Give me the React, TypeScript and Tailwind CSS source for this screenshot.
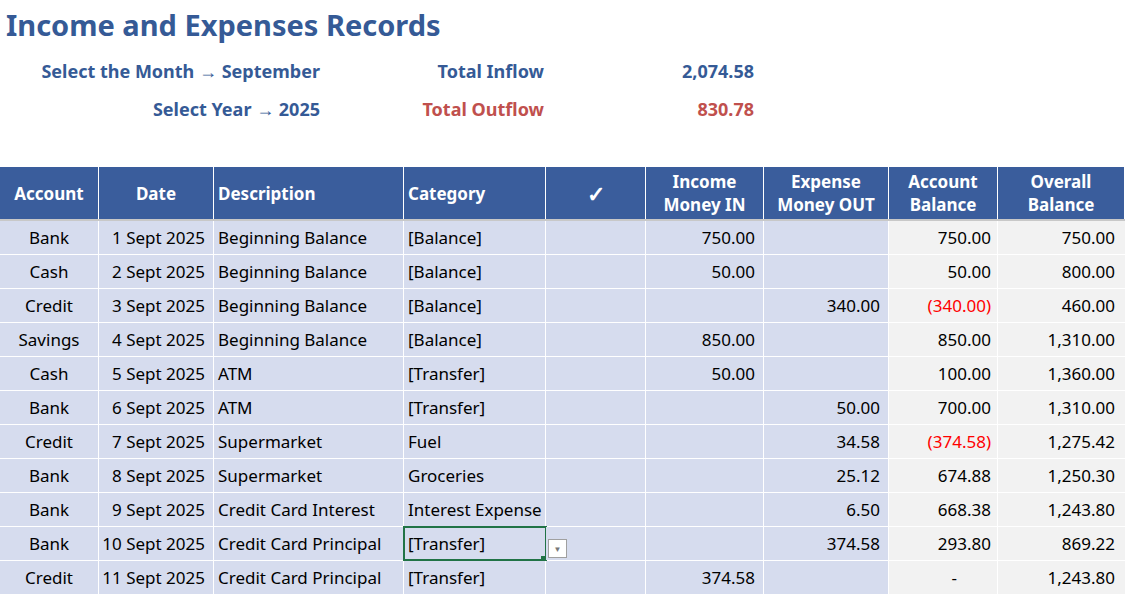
import React from 'react';

const rows = [
  ['Bank', '1 Sept 2025', 'Beginning Balance', '[Balance]', '750.00', '', '750.00', '750.00'],
  ['Cash', '2 Sept 2025', 'Beginning Balance', '[Balance]', '50.00', '', '50.00', '800.00'],
  ['Credit', '3 Sept 2025', 'Beginning Balance', '[Balance]', '', '340.00', '(340.00)', '460.00'],
  ['Savings', '4 Sept 2025', 'Beginning Balance', '[Balance]', '850.00', '', '850.00', '1,310.00'],
  ['Cash', '5 Sept 2025', 'ATM', '[Transfer]', '50.00', '', '100.00', '1,360.00'],
  ['Bank', '6 Sept 2025', 'ATM', '[Transfer]', '', '50.00', '700.00', '1,310.00'],
  ['Credit', '7 Sept 2025', 'Supermarket', 'Fuel', '', '34.58', '(374.58)', '1,275.42'],
  ['Bank', '8 Sept 2025', 'Supermarket', 'Groceries', '', '25.12', '674.88', '1,250.30'],
  ['Bank', '9 Sept 2025', 'Credit Card Interest', 'Interest Expense', '', '6.50', '668.38', '1,243.80'],
  ['Bank', '10 Sept 2025', 'Credit Card Principal', '[Transfer]', '', '374.58', '293.80', '869.22'],
  ['Credit', '11 Sept 2025', 'Credit Card Principal', '[Transfer]', '374.58', '', '-', '1,243.80'],
];

const cols = 'grid grid-cols-[99px_115px_190px_142px_100px_118px_125px_109px_127px]';

export default function App() {
  return (
    <div className="w-[1125px] h-[596px] overflow-hidden bg-white font-['Liberation_Sans'] text-[17px] text-black">
      <h1 className="pl-[6px] pt-[6px] h-[52px] text-[29px] font-bold text-[#355a96] leading-[38px]">Income and Expenses Records</h1>
      <div className="grid grid-cols-[320px_224px_210px] font-bold text-[18px] text-[#355a96] leading-[38px]">
        <div className="text-right">Select the Month → September</div>
        <div className="text-right">Total Inflow</div>
        <div className="text-right">2,074.58</div>
        <div className="text-right">Select Year → 2025</div>
        <div className="text-right text-[#c0504d]">Total Outflow</div>
        <div className="text-right text-[#c0504d]">830.78</div>
      </div>
      <div className={`${cols} mt-[39px] h-[54px] bg-[#3a5d9c] text-white font-bold border-b-2 border-[#c8c8c8]`}>
        {['Account', 'Date', 'Description', 'Category', '✓', 'Income Money IN', 'Expense Money OUT', 'Account Balance', 'Overall Balance'].map((h, i) => (
          <div key={i} className={`flex items-center border-r border-white leading-[23px] ${i === 2 || i === 3 ? 'pl-1' : 'justify-center text-center'} ${i === 4 ? 'text-[22px]' : ''}`}>
            {i >= 5 ? <span className="w-[100px]">{h}</span> : h}
          </div>
        ))}
      </div>
      {rows.map((r, ri) => (
        <div key={ri} className={`${cols} h-[34px] border-b border-white`}>
          <div className="bg-[#d6dcee] border-r border-white flex items-center justify-center">{r[0]}</div>
          <div className="bg-[#d6dcee] border-r border-white flex items-center justify-end pr-2">{r[1]}</div>
          <div className="bg-[#d6dcee] border-r border-white flex items-center pl-1">{r[2]}</div>
          <div className={`bg-[#d6dcee] border-r border-white flex items-center pl-1 relative ${ri === 9 ? 'outline-2 outline-[#217346] -outline-offset-1' : ''}`}>
            {r[3]}
            {ri === 9 && <span className="absolute right-[-2px] bottom-[-2px] w-[6px] h-[6px] bg-[#217346]" />}
          </div>
          <div className="bg-[#d6dcee] border-r border-white relative">
            {ri === 9 && (
              <span className="absolute left-[2px] top-[12px] w-[19px] h-[19px] bg-white border border-[#a0a0a0] flex items-center justify-center text-[8px] text-[#777]">▼</span>
            )}
          </div>
          <div className="bg-[#d6dcee] border-r border-white flex items-center justify-end pr-2">{r[4]}</div>
          <div className="bg-[#d6dcee] border-r border-white flex items-center justify-end pr-2">{r[5]}</div>
          <div className={`bg-[#f2f2f2] border-r border-white flex items-center justify-end ${r[6] === '-' ? 'pr-[40px]' : 'pr-[6px]'} ${r[6].startsWith('(') ? 'text-[#ff0000]' : ''}`}>{r[6]}</div>
          <div className="bg-[#f2f2f2] flex items-center justify-end pr-[10px]">{r[7]}</div>
        </div>
      ))}
    </div>
  );
}
